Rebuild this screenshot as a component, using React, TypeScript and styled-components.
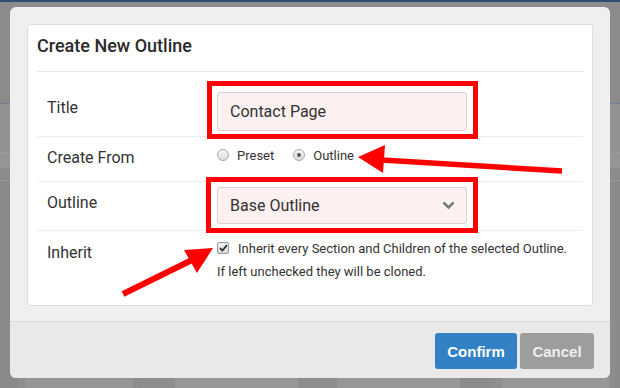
import React from "react";
import styled, { createGlobalStyle } from "styled-components";

const Global = createGlobalStyle`
  html, body { margin: 0; padding: 0; }
  body { font-family: Roboto, "Liberation Sans", Arial, sans-serif; background: #8b8b8b; }
  #root { width: 620px; height: 388px; }
`;

const Page = styled.div`
  position: relative;
  width: 620px;
  height: 388px;
  overflow: hidden;
  background: #8b8b8b;
  display: flex;
  flex-direction: column;
`;

const TopBar = styled.div`
  height: 2px;
  background: #2f4d6f;
`;

const Band = styled.div<{ $h: number; $bg: string; $line?: string }>`
  height: ${(p) => p.$h}px;
  background: ${(p) => p.$bg};
  border-top: ${(p) => (p.$line ? `1px solid ${p.$line}` : "none")};
`;

const Table = styled.div`
  flex: 1;
  display: flex;
  border-top: 1px solid #9a9a9a;
  margin-top: 12px;
`;

const Cell = styled.div<{ $w: number; $bg: string }>`
  width: ${(p) => p.$w}px;
  flex: none;
  background: ${(p) => p.$bg};
`;

const Modal = styled.div`
  position: absolute;
  top: 7px;
  left: 10px;
  width: 600px;
  height: 371px;
  border-radius: 6px;
  background: #efefef;
  overflow: hidden;
  display: flex;
  flex-direction: column;
`;

const ModalBody = styled.div`
  padding: 17px 16px 15px 17px;
`;

const Card = styled.div`
  width: 566px;
  box-sizing: border-box;
  background: #ffffff;
  border: 1px solid #dddddd;
  border-radius: 3px;
  padding: 0 9px;
`;

const CardHeader = styled.div`
  box-sizing: border-box;
  height: 47px;
  padding-top: 11px;
  border-bottom: 1px solid #e6e6e6;
  font-size: 18px;
  font-weight: 500;
  line-height: 20px;
  color: #2a2a2a;
`;

const Row = styled.div<{ $h: number; $last?: boolean }>`
  display: grid;
  grid-template-columns: 180px 1fr;
  align-items: start;
  height: ${(p) => p.$h}px;
  border-bottom: ${(p) => (p.$last ? "none" : "1px solid #eeeeee")};
`;

const Label = styled.div<{ $mt: number }>`
  margin-top: ${(p) => p.$mt}px;
  padding-left: 10px;
  font-size: 16px;
  line-height: 20px;
  color: #333333;
`;

const Field = styled.div<{ $mt: number }>`
  margin-top: ${(p) => p.$mt}px;
`;

/* red annotation frame drawn over the control */
const Highlight = styled.div<{ $l: number; $r: number; $t: number; $b: number }>`
  position: relative;
  width: 250px;
  &::after {
    content: "";
    position: absolute;
    left: -${(p) => p.$l}px;
    right: -${(p) => p.$r}px;
    top: -${(p) => p.$t}px;
    bottom: -${(p) => p.$b}px;
    border: 5px solid #ff0000;
    pointer-events: none;
  }
`;

const TextInput = styled.input`
  display: block;
  box-sizing: border-box;
  width: 250px;
  height: 39px;
  margin: 0;
  padding: 0 12px;
  border: 1px solid #ddd0d0;
  border-radius: 3px;
  background: #fdf0f0;
  font-family: Roboto, "Liberation Sans", Arial, sans-serif;
  font-size: 16px;
  color: #333333;
  outline: none;
`;

const SelectBox = styled.div`
  box-sizing: border-box;
  width: 250px;
  height: 37px;
  padding: 0 11px 0 12px;
  display: flex;
  align-items: center;
  justify-content: space-between;
  border: 1px solid #ddd0d0;
  border-radius: 3px;
  background: #fdf0f0;
  font-size: 16px;
  color: #333333;
`;

const RadioGroup = styled.div`
  display: flex;
  align-items: center;
  gap: 19px;
  height: 20px;
  font-size: 13px;
  color: #333333;
`;

const RadioOption = styled.label`
  display: inline-flex;
  align-items: center;
  gap: 8px;
`;

const RadioDot = styled.span<{ $checked?: boolean }>`
  position: relative;
  width: 12px;
  height: 12px;
  box-sizing: border-box;
  border-radius: 50%;
  border: 1px solid #a8a8a8;
  background: linear-gradient(#f6f6f6, #dcdcdc);
  &::after {
    content: "";
    display: ${(p) => (p.$checked ? "block" : "none")};
    position: absolute;
    left: 3px;
    top: 3px;
    width: 4px;
    height: 4px;
    border-radius: 50%;
    background: #5a5a5a;
  }
`;

const CheckLine = styled.div`
  display: flex;
  align-items: center;
  gap: 9px;
  height: 20px;
  font-size: 13px;
  color: #333333;
`;

const CheckBox = styled.span`
  width: 12px;
  height: 12px;
  box-sizing: border-box;
  border: 1px solid #9a9a9a;
  border-radius: 2px;
  background: linear-gradient(#f4f4f4, #d6d6d6);
  display: flex;
  align-items: center;
  justify-content: center;
`;

const HelpText = styled.div`
  margin-top: 4px;
  font-size: 13px;
  line-height: 20px;
  color: #333333;
`;

const Footer = styled.div`
  box-sizing: border-box;
  height: 57px;
  border-top: 1px solid #dadada;
  background: #e9e9e9;
  padding: 11px 16px 0 0;
  display: flex;
  justify-content: flex-end;
  align-items: flex-start;
  gap: 3px;
`;

const Button = styled.button<{ $variant: "primary" | "cancel"; $w: number }>`
  width: ${(p) => p.$w}px;
  height: 36px;
  border: none;
  border-radius: 3px;
  font-family: "Liberation Sans", Arial, sans-serif;
  font-size: 15px;
  font-weight: 700;
  color: ${(p) => (p.$variant === "primary" ? "#ffffff" : "#eeeeee")};
  background: ${(p) => (p.$variant === "primary" ? "#3281c4" : "#9d9d9d")};
  padding: 0;
`;

const Overlay = styled.svg`
  position: absolute;
  left: 0;
  top: 0;
  pointer-events: none;
`;

const cells: [number, string][] = [
  [18, "#8a8a8a"],
  [8, "#8f8f8f"],
  [107, "#959595"],
  [8, "#8c8c8c"],
  [34, "#8e8e8e"],
  [123, "#989898"],
  [39, "#8d8d8d"],
  [123, "#979797"],
  [34, "#8c8c8c"],
  [8, "#8f8f8f"],
  [107, "#979797"],
  [6, "#8d8d8d"],
  [5, "#8a8a8a"],
];

export default function App() {
  return (
    <>
      <Global />
      <Page>
        <TopBar />
        <Band $h={101} $bg="#8b8b8b" />
        <Band $h={48} $bg="#929292" $line="#6d7f90" />
        <Band $h={15} $bg="#959595" $line="#9c9c9c" />
        <Table>
          {cells.map(([w, bg], i) => (
            <Cell key={i} $w={w} $bg={bg} />
          ))}
        </Table>

        <Modal>
          <ModalBody>
            <Card>
              <CardHeader>Create New Outline</CardHeader>
              <Row $h={64}>
                <Label $mt={26}>Title</Label>
                <Field $mt={20}>
                  <Highlight $l={10} $r={11} $t={11} $b={8}>
                    <TextInput value="Contact Page" readOnly />
                  </Highlight>
                </Field>
              </Row>
              <Row $h={44}>
                <Label $mt={11}>Create From</Label>
                <Field $mt={8}>
                  <RadioGroup>
                    <RadioOption>
                      <RadioDot />
                      Preset
                    </RadioOption>
                    <RadioOption>
                      <RadioDot $checked />
                      Outline
                    </RadioOption>
                  </RadioGroup>
                </Field>
              </Row>
              <Row $h={48}>
                <Label $mt={11}>Outline</Label>
                <Field $mt={5}>
                  <Highlight $l={11} $r={11} $t={10} $b={9}>
                    <SelectBox>
                      Base Outline
                      <svg width="13" height="9" viewBox="0 0 13 9">
                        <polyline
                          points="1.5,1.5 6.5,6.5 11.5,1.5"
                          fill="none"
                          stroke="#7a7a7a"
                          strokeWidth="2.6"
                        />
                      </svg>
                    </SelectBox>
                  </Highlight>
                </Field>
              </Row>
              <Row $h={74} $last>
                <Label $mt={12}>Inherit</Label>
                <Field $mt={7}>
                  <CheckLine>
                    <CheckBox>
                      <svg width="9" height="8" viewBox="0 0 9 8">
                        <polyline
                          points="1,4.2 3.4,6.5 8,1.2"
                          fill="none"
                          stroke="#333"
                          strokeWidth="1.8"
                        />
                      </svg>
                    </CheckBox>
                    Inherit every Section and Children of the selected Outline.
                  </CheckLine>
                  <HelpText>If left unchecked they will be cloned.</HelpText>
                </Field>
              </Row>
            </Card>
          </ModalBody>
          <Footer>
            <Button $variant="primary" $w={82}>Confirm</Button>
            <Button $variant="cancel" $w={74}>Cancel</Button>
          </Footer>
        </Modal>

        <Overlay width="620" height="388" viewBox="0 0 620 388">
          <line x1="562" y1="171" x2="382" y2="160" stroke="#ff0000" strokeWidth="5.5" />
          <polygon points="358,157 385,145 383,173" fill="#ff0000" />
          <line x1="123" y1="294" x2="192" y2="260" stroke="#ff0000" strokeWidth="6" />
          <polygon points="213,248 184,250 197,273" fill="#ff0000" />
        </Overlay>
      </Page>
    </>
  );
}
